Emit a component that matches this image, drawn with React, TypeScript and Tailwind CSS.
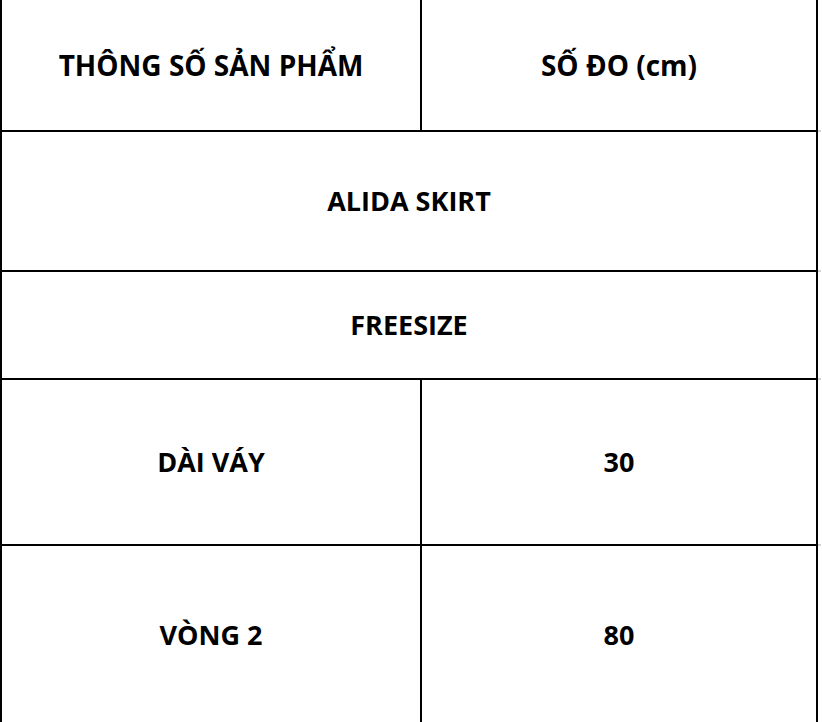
const rows: { cells: string[]; height: string; size: string }[] = [
  { cells: ["THÔNG SỐ SẢN PHẨM", "SỐ ĐO (cm)"], height: "h-[130px]", size: "text-[28px]" },
  { cells: ["ALIDA SKIRT"], height: "h-[138px]", size: "text-[27px]" },
  { cells: ["FREESIZE"], height: "h-[106px]", size: "text-[27px]" },
  { cells: ["DÀI VÁY", "30"], height: "h-[164px]", size: "text-[27px]" },
  { cells: ["VÒNG 2", "80"], height: "h-[178px]", size: "text-[27px]" },
];

export default function App() {
  return (
    <div className="min-h-screen bg-white font-['Open_Sans',_sans-serif] font-bold text-black">
      {rows.map((row, i) => (
        <div key={i} className={`flex ${row.size}`}>
          <div
            className={`flex w-[818px] border-x-2 border-black ${
              i < rows.length - 1 ? "border-b-2" : ""
            }`}
          >
            {row.cells.length === 2 ? (
              <>
                <div className={`flex w-[418px] items-center justify-center ${row.height}`}>
                  {row.cells[0]}
                </div>
                <div
                  className={`flex flex-1 items-center justify-center border-l-2 border-black ${row.height}`}
                >
                  {row.cells[1]}
                </div>
              </>
            ) : (
              <div className={`flex flex-1 items-center justify-center ${row.height}`}>
                {row.cells[0]}
              </div>
            )}
          </div>
          {/* faint stub where each rule runs past the right edge */}
          <div className={`w-[3px] ${i < rows.length - 1 ? "border-b-2 border-gray-300" : ""}`} />
        </div>
      ))}
    </div>
  );
}
